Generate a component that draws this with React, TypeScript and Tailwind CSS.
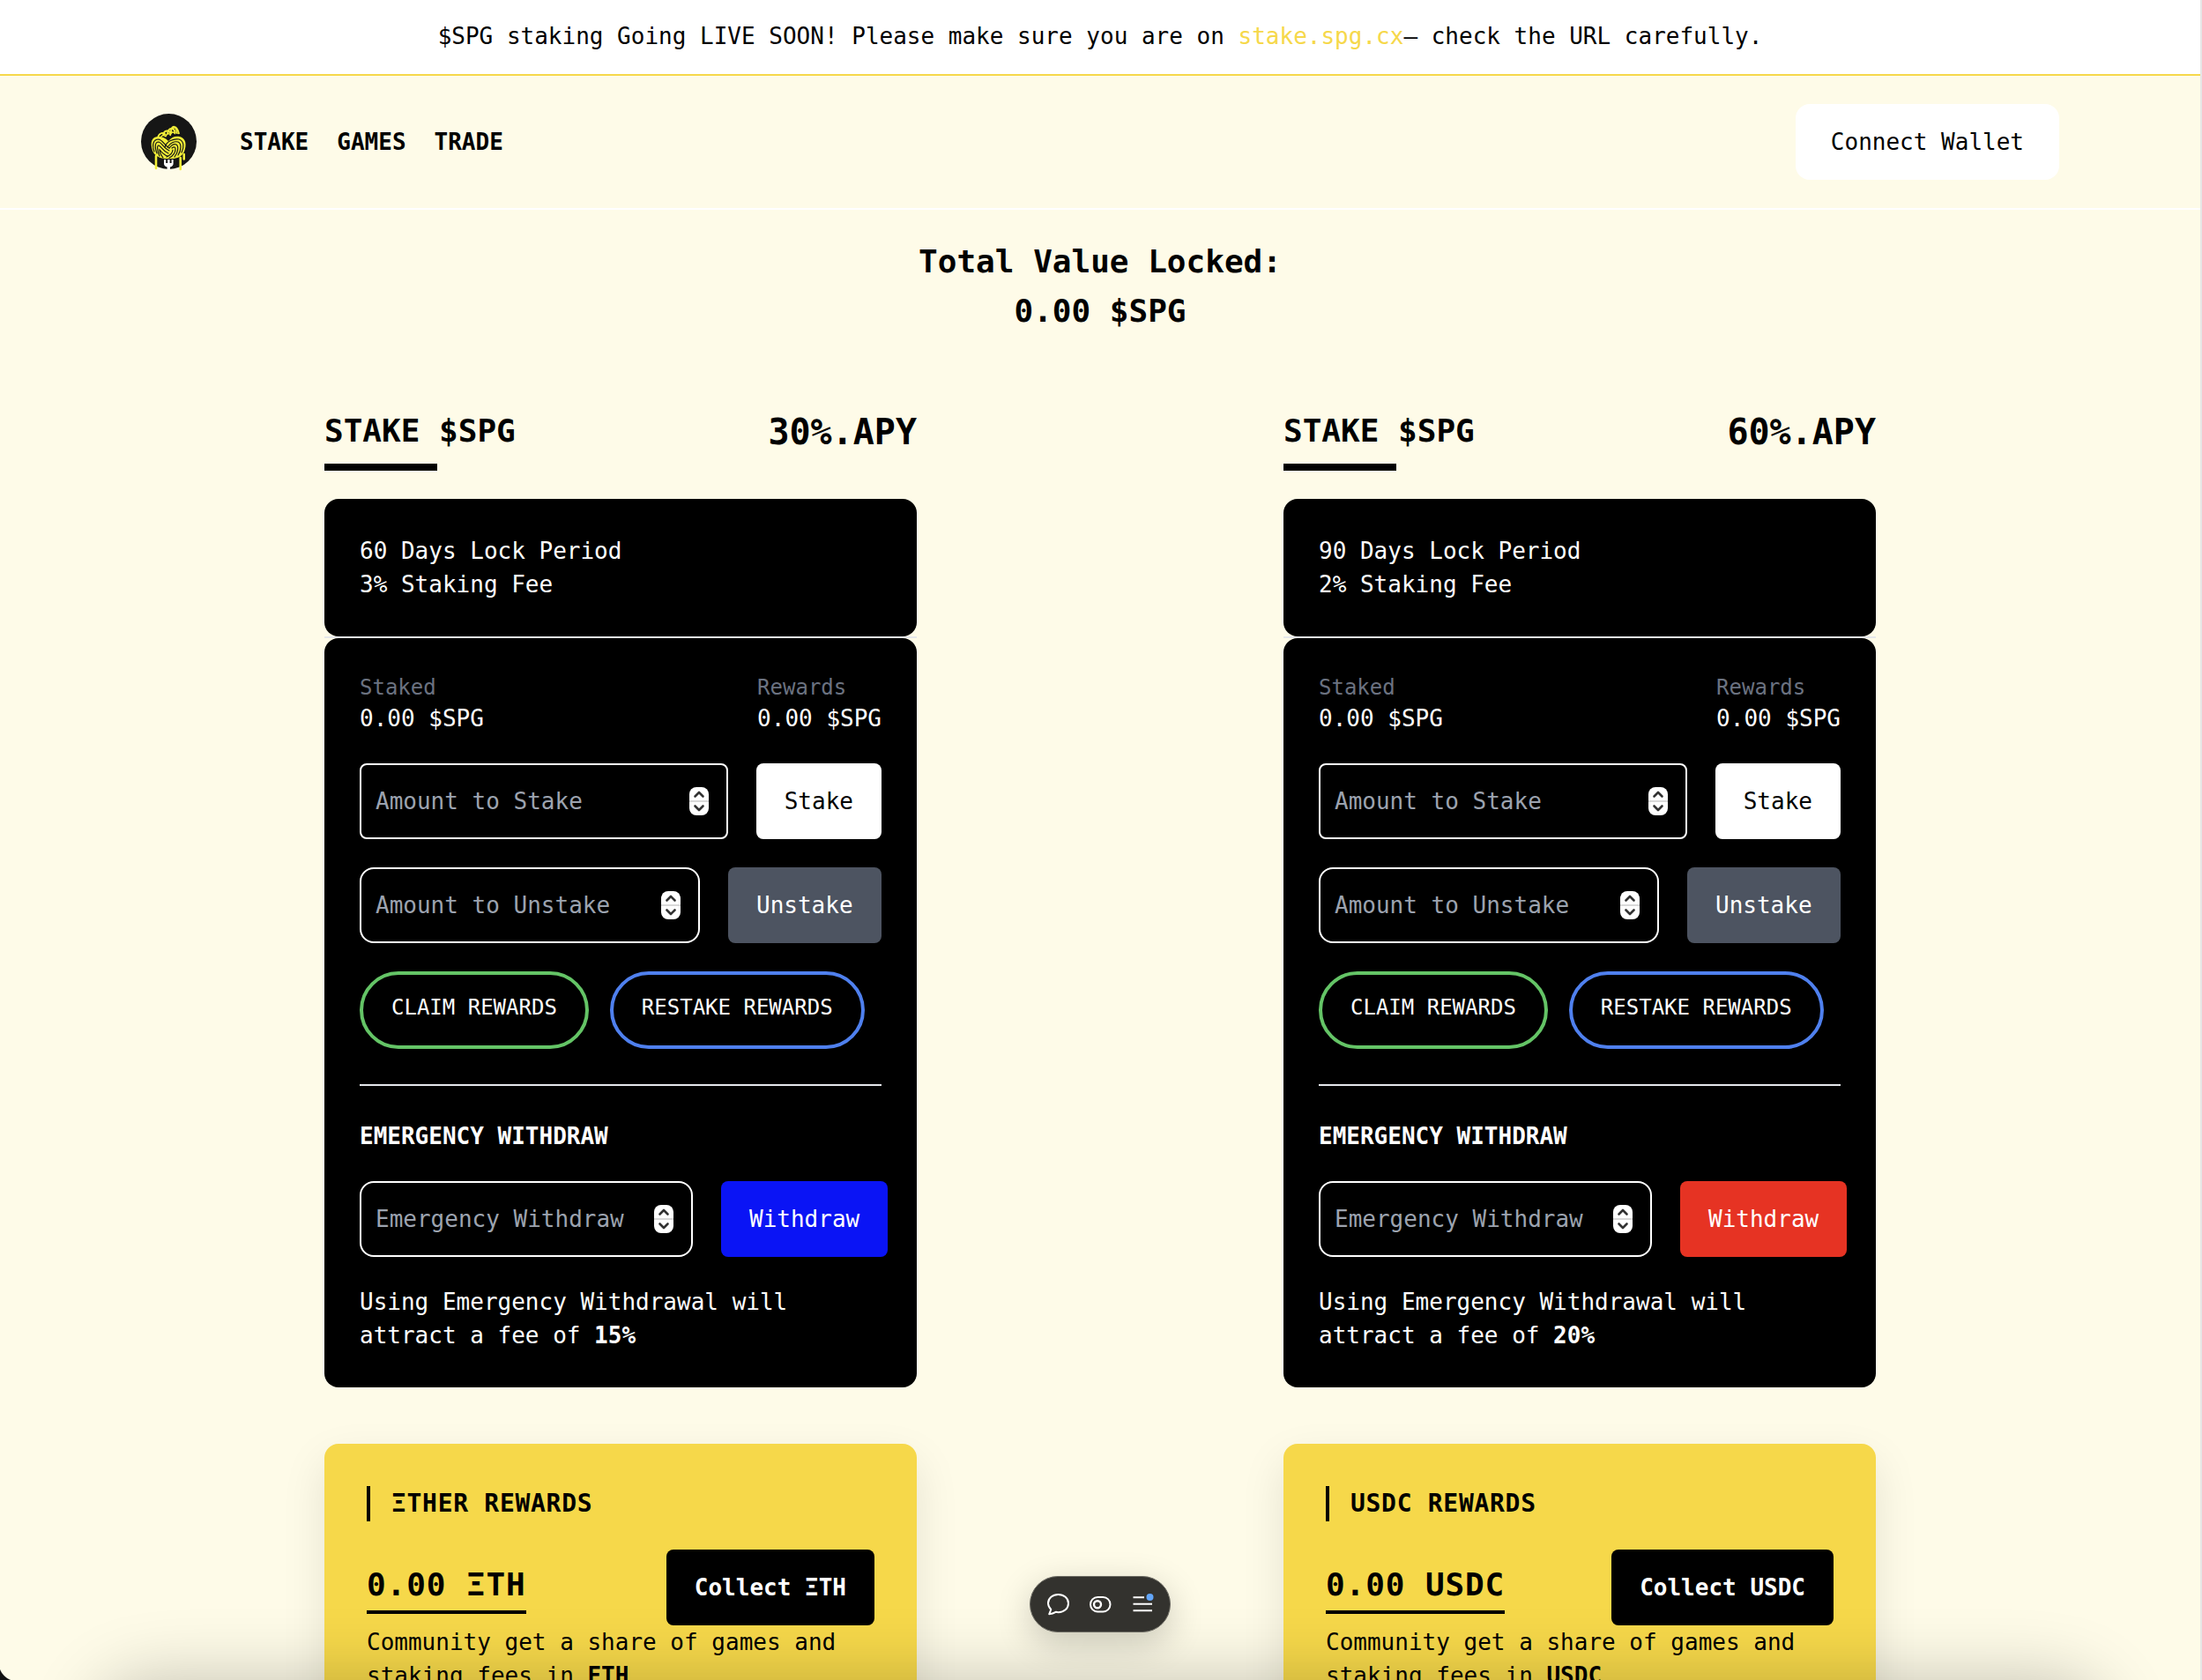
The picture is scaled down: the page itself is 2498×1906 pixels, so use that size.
import React from "react";

type Pool = {
  apy: string;
  days: string;
  fee: string;
  exitFee: string;
  withdrawClass: string;
  rewardTitle: string;
  unit: string;
  ticker: string;
};

const pools: Pool[] = [
  {
    apy: "30%.APY",
    days: "60 Days Lock Period",
    fee: "3% Staking Fee",
    exitFee: "15%",
    withdrawClass: "bg-[#0a14f5]",
    rewardTitle: "ΞTHER REWARDS",
    unit: "ΞTH",
    ticker: "ETH",
  },
  {
    apy: "60%.APY",
    days: "90 Days Lock Period",
    fee: "2% Staking Fee",
    exitFee: "20%",
    withdrawClass: "bg-[#e63323]",
    rewardTitle: "USDC REWARDS",
    unit: "USDC",
    ticker: "USDC",
  },
];

function Logo() {
  return (
    <svg viewBox="0 0 64 66" className="mt-0.5 h-[66px] w-16 shrink-0" fill="none">
      <circle cx="31.5" cy="31.5" r="31.5" fill="#161616" />
      <path d="M26 52v4.500q0 3 3.600 4v2.500h3.400v-2.500q3.600-1 3.600-4V52h-2v4h-2v-4h-2.400v4h-2v-4z" fill="#fff" />
      {/* strands on top of the pile */}
      <path d="M19 27c2-6 6-6 9-3M25 25c1-7 7-7 9-2M30 23c1-8 7-8 9-1M34 21c0-9 7-8 9 2" stroke="#f2ee38" strokeWidth="2" />
      <path d="M22 27c2-3 4-3 6-1M28 26c1-4 4-4 6-2M33 25c1-5 4-5 6-2M36 17c3-3 4 0 5 6" stroke="#f2ee38" strokeWidth="1.500" />
      {/* knotted ball of spaghetti */}
      <path d="M13 42C10 32 12 26 20 26q6 0 11 5c4-5 8-6 13-5 7 2 8 9 5 17-3 6-8 8-14 8H26c-6-1-11-4-13-9z" fill="#f2ee38" />
      <g stroke="#161616" strokeWidth="1.200" strokeLinecap="round">
        <path d="M15 43c-3-8-1-14 5-14 5 1 6 7 12 10" />
        <path d="M18 45c-3-8-2-13 2-13 4 1 5 7 12 10" />
        <path d="M21 48c-3-7-3-12-1-12 3 1 5 7 11 9" />
        <path d="M25 50c-3-4-4-8-4-9 3 3 5 6 9 7" />
        <path d="M27 38c2-7 10-10 16-9 6 2 6 9 3 15" />
        <path d="M30 38c3-5 8-7 12-6 4 2 4 9 0 15" />
        <path d="M32 39c3-4 6-5 8-4 3 2 2 9-2 14" />
        <path d="M35 39c3-2 4-1 4 1 0 4-3 8-7 10" />
        <path d="M36 41c0 4-3 6-7 8" />
      </g>
      <g stroke="#f2ee38" strokeWidth="2.600" strokeLinecap="round">
        <path d="M17 48v14M44.700 50v13M48.700 46v5.500" />
      </g>
    </svg>
  );
}

function Stepper() {
  return (
    <svg viewBox="0 0 22 32" className="mr-5 h-8 w-[22px] shrink-0" fill="none">
      <rect width="22" height="32" rx="8" fill="#fff" />
      <rect y="15" width="22" height="2" fill="#d9d9d9" />
      <path d="M6.500 10.500 11 6l4.500 4.500M6.500 21.500 11 26l4.500-4.500" stroke="#333" strokeWidth="2.600" strokeLinecap="round" strokeLinejoin="round" />
    </svg>
  );
}

function AmountField({ label, className }: { label: string; className: string }) {
  return (
    <div className={`flex h-[86px] items-center justify-between border-2 border-white pl-4 ${className}`}>
      <span className="whitespace-nowrap text-[#9ca3af]">{label}</span>
      <Stepper />
    </div>
  );
}

function Balance({ label }: { label: string }) {
  return (
    <div>
      <div className="h-[35px] text-[24px] leading-9 text-[#6b7280]">{label}</div>
      <div className="h-[35px] leading-9">0.00 $SPG</div>
    </div>
  );
}

function PoolColumn({ pool }: { pool: Pool }) {
  return (
    <section className="w-[672px]">
      <div className="flex h-[68px] justify-between font-bold">
        <h2 className="text-[36px] leading-[62px]">STAKE $SPG</h2>
        <span className="text-[40px] leading-[64px]">{pool.apy}</span>
      </div>
      <div className="h-2 w-32 bg-black" />

      <div className="mt-8 h-[156px] rounded-2xl bg-black px-10 pt-10 leading-[38px] text-white">
        <p>{pool.days}</p>
        <p>{pool.fee}</p>
      </div>
      <div className="h-0.5 bg-[#e5e7eb]" />
      <div className="h-[850px] rounded-2xl bg-black px-10 pt-[38px] text-white">
        <div className="flex justify-between">
          <Balance label="Staked" />
          <Balance label="Rewards" />
        </div>
        <div className="mt-[34px] flex gap-8">
          <AmountField label="Amount to Stake" className="w-[418px] rounded-lg" />
          <button className="h-[86px] rounded-lg bg-white px-8 text-black">Stake</button>
        </div>
        <div className="mt-8 flex gap-8">
          <AmountField label="Amount to Unstake" className="w-[386px] rounded-2xl" />
          <button className="h-[86px] rounded-lg bg-[#4d5461] px-8">Unstake</button>
        </div>
        <div className="mt-8 flex gap-6 text-[24px]">
          <button className="h-[88px] rounded-full border-4 border-[#64c466] px-8 pb-1.5">CLAIM REWARDS</button>
          <button className="h-[88px] rounded-full border-4 border-[#4f80ee] px-8 pb-1.5">RESTAKE REWARDS</button>
        </div>
        <div className="mt-10 h-0.5 bg-[#e5e7eb]" />
        <h3 className="mt-[38px] leading-[38px] font-bold">EMERGENCY WITHDRAW</h3>
        <div className="mt-8 flex gap-8">
          <AmountField label="Emergency Withdraw" className="w-[378px] shrink-0 rounded-2xl" />
          <button className={`h-[86px] shrink-0 rounded-lg px-8 ${pool.withdrawClass}`}>Withdraw</button>
        </div>
        <p className="mt-8 leading-[38px]">
          Using Emergency Withdrawal will
          <br />
          attract a fee of <b>{pool.exitFee}</b>
        </p>
      </div>

      <div className="mt-16 h-[360px] rounded-2xl bg-[#f6d84a] px-12 pt-12 shadow-[0_20px_50px_rgba(0,0,0,0.1)]">
        <h3 className="h-10 border-l-4 border-black pl-6 text-[28px] leading-10 font-bold tracking-wide">{pool.rewardTitle}</h3>
        <div className="mt-8 flex h-[86px] justify-between">
          <span className="mt-[13px] h-[60px] border-b-4 border-black text-[36px] leading-[54px] font-bold tracking-wide">0.00 {pool.unit}</span>
          <button className="h-[86px] rounded-lg bg-black px-8 font-bold text-white">Collect {pool.unit}</button>
        </div>
        <p className="leading-[38px]">
          Community get a share of games and
          <br />
          staking fees in <b>{pool.ticker}</b>
        </p>
      </div>
    </section>
  );
}

function Toolbar() {
  return (
    <div className="absolute bottom-[54px] left-[1168px] flex h-16 w-40 items-center rounded-full border border-[#6b6a62] bg-[#33322e] pl-[18px] shadow-[0_12px_40px_rgba(0,0,0,0.2)]">
      <svg viewBox="0 0 124 32" className="h-8 w-[124px] shrink-0" fill="none" stroke="#fff" strokeWidth="2">
        <path d="M3.200 27.300 5.300 22A10.300 10.300 0 0 1 2 15C2 9 7.200 5 13.500 5S25 9 25 15s-5 10.200-11.300 10.200c-1.200 0-2 0-3-.4q-3.500 2.200-7.500 2.500z" strokeLinejoin="round" />
        <rect x="50" y="8" width="22.500" height="16.500" rx="8.200" />
        <circle cx="58" cy="16.300" r="4" strokeWidth="2.400" />
        <path d="M98.500 8.300H111M98.500 15.800H120M98.500 23.300H120" />
        <circle cx="117.500" cy="8" r="4" fill="#62a5f8" stroke="none" />
      </svg>
    </div>
  );
}

export default function App() {
  return (
    <div className="relative flex h-[1906px] w-[2498px] overflow-hidden bg-[#fefbe8] font-['DejaVu_Sans_Mono',monospace] text-[26px] leading-[38px] text-black">
      <div className="w-[2496px] shrink-0">
        <div className="flex h-[86px] items-center justify-center border-b-2 border-[#f6d84a] bg-white">
          <p className="-mt-0.5 whitespace-nowrap">
            $SPG staking Going LIVE SOON! Please make sure you are on <span className="text-[#f6d84a]">stake.spg.cx</span>– check the URL carefully.
          </p>
        </div>
        <header className="flex h-[152px] items-center border-b-2 border-white pr-40 pl-40">
          <Logo />
          <nav className="ml-12 flex gap-8 font-bold">
            <a>STAKE</a>
            <a>GAMES</a>
            <a>TRADE</a>
          </nav>
          <button className="ml-auto h-[86px] rounded-2xl bg-white px-10">Connect Wallet</button>
        </header>
        <h1 className="pt-[31px] text-center text-[36px] leading-[56px] font-bold">
          Total Value Locked:
          <br />
          0.00 $SPG
        </h1>
        <main className="mt-[77px] flex gap-[416px] pl-[368px]">
          {pools.map((pool) => (
            <PoolColumn key={pool.apy} pool={pool} />
          ))}
        </main>
      </div>
      <div className="w-0.5 bg-[#e6e6e6]" />
      <div className="pointer-events-none absolute top-full right-[110px] left-[110px] h-60 rounded-[60px] shadow-[0_0_80px_rgba(0,0,0,0.23)]" />
      <div className="pointer-events-none absolute bottom-0 left-0 size-5 bg-[radial-gradient(circle_at_20px_0px,transparent_21px,#111_22px)]" />
      <Toolbar />
    </div>
  );
}
